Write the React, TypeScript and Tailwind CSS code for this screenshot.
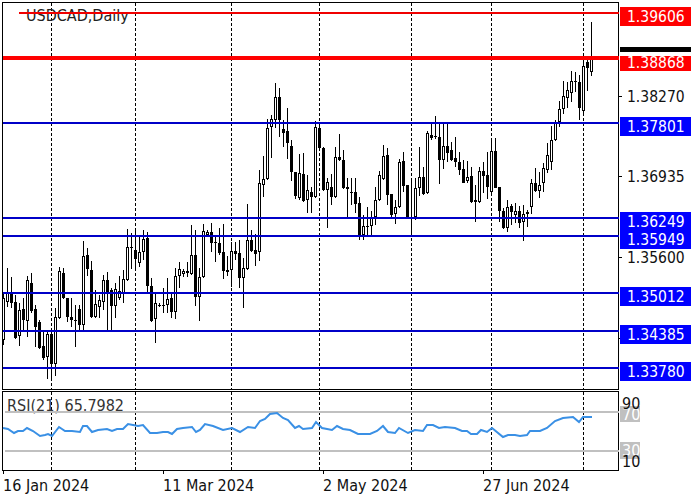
// USDCAD daily chart with support/resistance levels and an RSI pane
const font = "font-['DejaVu_Sans_Condensed','DejaVu_Sans',sans-serif]";

// high, low, body top, body bottom, 1 = white candle. One every 4px from x=3
const candles: number[][] = [
  [293, 345, 298, 340, 1], [268, 307, 293, 302, 1], [277, 308, 293, 303, 0], [295, 339, 302, 338, 0],
  [303, 346, 310, 336, 1], [298, 330, 309, 320, 0], [276, 337, 280, 321, 1], [273, 313, 283, 311, 0],
  [305, 347, 309, 327, 0], [320, 349, 322, 348, 0], [330, 360, 346, 358, 0], [330, 379, 334, 357, 1],
  [330, 378, 334, 364, 0], [308, 376, 317, 364, 1], [267, 319, 271, 318, 1], [268, 299, 273, 298, 0],
  [298, 322, 298, 317, 0], [298, 327, 317, 320, 0], [305, 347, 320, 321, 0], [305, 330, 309, 325, 0],
  [241, 330, 256, 325, 1], [248, 276, 255, 269, 0], [261, 318, 270, 317, 0], [290, 318, 304, 317, 1],
  [295, 318, 300, 307, 1], [275, 310, 280, 302, 1], [272, 330, 280, 293, 0], [288, 330, 290, 306, 0],
  [283, 318, 289, 306, 1], [276, 300, 291, 298, 1], [270, 303, 279, 293, 1], [229, 281, 247, 280, 1],
  [233, 269, 247, 248, 0], [230, 269, 250, 259, 0], [235, 267, 252, 263, 1], [230, 260, 239, 252, 1],
  [232, 293, 238, 286, 0], [278, 322, 286, 321, 0], [293, 343, 303, 319, 1], [303, 307, 305, 306, 0],
  [288, 313, 305, 306, 0], [278, 313, 299, 305, 1], [293, 318, 298, 312, 0], [268, 319, 276, 312, 1],
  [262, 288, 269, 276, 1], [269, 277, 271, 274, 1], [262, 277, 271, 273, 0], [225, 275, 255, 274, 1],
  [230, 306, 255, 297, 0], [268, 321, 277, 297, 1], [224, 278, 231, 277, 1], [230, 237, 232, 235, 1],
  [223, 252, 232, 243, 0], [235, 262, 242, 243, 0], [228, 255, 243, 253, 0], [224, 279, 252, 271, 0],
  [256, 276, 270, 272, 0], [242, 287, 251, 270, 1], [242, 260, 251, 254, 0], [240, 288, 253, 278, 0],
  [258, 308, 268, 278, 1], [204, 270, 240, 269, 1], [230, 252, 240, 251, 0], [234, 266, 250, 254, 0],
  [170, 261, 183, 252, 1], [156, 197, 179, 185, 1], [119, 180, 128, 179, 1], [115, 158, 119, 127, 1],
  [83, 128, 97, 120, 1], [88, 137, 97, 120, 0], [120, 147, 129, 133, 0], [108, 159, 131, 143, 0],
  [140, 181, 146, 172, 0], [172, 199, 172, 196, 0], [154, 200, 173, 198, 1], [153, 202, 174, 201, 0],
  [175, 213, 190, 200, 1], [187, 213, 192, 197, 0], [121, 198, 127, 197, 1], [123, 150, 128, 148, 0],
  [147, 191, 148, 190, 0], [178, 228, 182, 190, 1], [174, 205, 187, 197, 0], [147, 198, 157, 197, 1],
  [134, 161, 157, 160, 0], [150, 189, 160, 188, 0], [178, 218, 187, 189, 0], [178, 205, 192, 193, 0],
  [178, 213, 192, 204, 0], [197, 240, 203, 235, 0], [215, 240, 226, 235, 1], [207, 235, 226, 227, 0],
  [211, 235, 217, 226, 1], [187, 225, 200, 217, 1], [171, 201, 175, 200, 1], [145, 180, 156, 179, 1],
  [148, 205, 155, 195, 0], [194, 217, 194, 215, 0], [200, 224, 207, 214, 1], [159, 208, 162, 207, 1],
  [152, 192, 161, 186, 0], [185, 218, 185, 217, 0], [180, 233, 217, 218, 0], [178, 220, 188, 217, 1],
  [147, 196, 177, 188, 1], [167, 195, 177, 194, 0], [131, 194, 133, 193, 1], [123, 140, 135, 138, 0],
  [116, 139, 136, 137, 0], [123, 184, 137, 160, 0], [123, 169, 146, 160, 1], [123, 162, 146, 153, 0],
  [142, 161, 150, 160, 0], [137, 167, 158, 162, 0], [152, 175, 162, 170, 0], [160, 183, 169, 183, 0],
  [161, 183, 177, 181, 1], [167, 203, 176, 202, 0], [185, 222, 200, 202, 0], [167, 203, 171, 202, 1],
  [162, 193, 171, 176, 0], [152, 199, 175, 187, 0], [140, 195, 151, 192, 1], [138, 188, 151, 188, 0],
  [187, 222, 187, 211, 0], [208, 229, 211, 228, 0], [200, 232, 207, 228, 1], [204, 225, 206, 212, 0],
  [203, 223, 211, 215, 1], [206, 228, 211, 223, 0], [205, 241, 214, 222, 1], [210, 227, 212, 214, 1],
  [179, 214, 183, 207, 1], [168, 192, 183, 191, 0], [172, 198, 185, 191, 1], [163, 192, 168, 183, 1],
  [143, 173, 155, 170, 1], [126, 170, 140, 162, 1], [120, 141, 122, 140, 1], [101, 127, 109, 122, 1],
  [81, 114, 96, 109, 1], [82, 108, 90, 98, 1], [71, 102, 81, 93, 1], [72, 92, 81, 82, 0],
  [75, 120, 82, 108, 0], [60, 115, 66, 111, 1], [60, 91, 62, 68, 0], [22, 76, 58, 72, 1],
];

const rsi =
  "3,428 8,429 14,433 18,431 23,431 27,428 33,431 40,436 45,435 48,434 52,436 59,427 65,431 72,431 80,432 83,426 87,426 92,432 98,430 107,429 112,431 117,429 123,429 128,424 133,425 138,426 143,425 150,433 157,433 163,432 168,432 172,434 177,429 183,428 192,427 196,432 200,430 205,424 213,426 223,430 232,428 240,432 248,427 255,428 260,421 265,419 270,414 277,413 283,418 288,420 295,428 299,426 303,429 312,428 316,422 322,428 332,430 337,426 343,429 350,430 358,434 370,434 377,431 383,426 388,432 395,433 399,428 408,433 415,430 423,431 427,425 433,425 439,428 445,427 455,428 462,431 467,431 471,434 477,434 481,430 487,432 492,428 503,437 508,435 515,435 520,436 527,435 530,431 540,431 547,428 555,421 563,418 573,417 579,422 583,417 592,417";

const gridX = [51, 135, 231, 319, 411, 491, 583];
const blueLevels = [123, 218, 236, 293, 331, 368];

// y is the top of the 19px label in page pixels
const priceTicks = [96, 176, 257, 338];
const plainPrices = [
  { y: 88, text: "1.38270" },
  { y: 168, text: "1.36935" },
  { y: 249, text: "1.35600" },
  { y: 330, text: "1.34265" },
];
const levelLabels = [
  { y: 7, text: "1.39606", bg: "bg-[#ff0000]" },
  { y: 117, text: "1.37801", bg: "bg-[#0000ff]" },
  { y: 212, text: "1.36249", bg: "bg-[#0000ff]" },
  { y: 230, text: "1.35949", bg: "bg-[#0000ff]" },
  { y: 287, text: "1.35012", bg: "bg-[#0000ff]" },
  { y: 325, text: "1.34385", bg: "bg-[#0000ff]" },
  { y: 362, text: "1.33780", bg: "bg-[#0000ff]" },
];

const dates = ["16 Jan 2024", "11 Mar 2024", "2 May 2024", "27 Jun 2024"];

function Candle({ x, c }: { x: number; c: number[] }) {
  const [high, low, top, bottom, up] = c;
  const h = Math.max(bottom - top, 1);
  return (
    <g>
      <rect x={x} y={high} width={1} height={low - high} fill="#000" />
      <rect x={x - 1} y={top} width={3} height={h} fill="#000" />
      {up === 1 && h > 2 && <rect x={x} y={top + 1} width={1} height={h - 2} fill="#fff" />}
    </g>
  );
}

function MainChart() {
  return (
    <svg width={615} height={386} viewBox="3 3 615 386" shapeRendering="crispEdges" className="block overflow-visible">
      {gridX.map((x) => (
        <line key={x} x1={x + 0.5} x2={x + 0.5} y1={3} y2={389} stroke="#000" strokeDasharray="3 2" />
      ))}
      <text x={26} y={21} className={`${font} text-[16px] fill-[#222]`} shapeRendering="auto">
        USDCAD,Daily
      </text>
      {candles.map((c, i) => (
        <Candle key={i} x={3 + i * 4} c={c} />
      ))}
      <rect x={19} y={12} width={600} height={2} fill="#f00000" />
      <rect x={3} y={56} width={616} height={4} fill="#ff0000" />
      {blueLevels.map((y) => (
        <rect key={y} x={3} y={y - 1} width={616} height={2} fill="#0000c8" />
      ))}
    </svg>
  );
}

function RsiChart() {
  return (
    <svg width={615} height={78} viewBox="3 392 615 78" shapeRendering="crispEdges" className="block overflow-visible">
      {gridX.map((x) => (
        <line key={x} x1={x + 0.5} x2={x + 0.5} y1={392} y2={470} stroke="#000" strokeDasharray="3 2" />
      ))}
      <text x={7} y={411} className={`${font} text-[16px] fill-[#333]`} shapeRendering="auto">
        RSI(21) 65.7982
      </text>
      <rect x={5} y={411} width={614} height={2} fill="#c0c0c0" />
      <rect x={5} y={450} width={614} height={2} fill="#c0c0c0" />
      <polyline points={rsi} fill="none" stroke="#3a90e5" strokeWidth={2} shapeRendering="auto" />
    </svg>
  );
}

function PriceAxis() {
  return (
    <div className={`relative flex-1 ${font} text-[15.5px] leading-[19px]`}>
      {priceTicks.map((y) => (
        <div key={y} className="absolute left-0 w-[3px] h-px bg-black" style={{ top: y - 2 }} />
      ))}
      {plainPrices.map((p) => (
        <div key={p.y} className="absolute left-[8px] text-[#111]" style={{ top: p.y - 2 }}>
          {p.text}
        </div>
      ))}
      <div className="absolute left-[1px] top-[45px] w-[71px] h-[5px] bg-black" />
      <div className="absolute left-[1px] top-[54px] w-[71px] h-[15px] leading-[15px] pl-[7px] bg-[#ff0000] text-white">
        1.38868
      </div>
      {levelLabels.map((l) => (
        <div
          key={l.text}
          className={`absolute left-[1px] w-[71px] h-[19px] pl-[7px] pt-px text-white ${l.bg}`}
          style={{ top: l.y - 2 }}
        >
          {l.text}
        </div>
      ))}
    </div>
  );
}

function RsiAxis() {
  return (
    <div className={`relative flex-1 ${font} text-[16px] leading-[16px]`}>
      <div className="absolute left-[1px] top-[15px] w-[20px] h-[16px] pl-[2px] pt-[1px] bg-[#c0c0c0] text-white">70</div>
      <div className="absolute left-[1px] top-[51px] w-[20px] h-[17px] pl-[2px] pt-[1px] bg-[#c0c0c0] text-white">30</div>
      <div className="absolute left-[3px] top-[5px] text-[#111]">90</div>
      <div className="absolute left-[3px] top-[63px] text-[#111]">10</div>
    </div>
  );
}

export default function App() {
  return (
    <div className="w-[700px] h-[500px] bg-white overflow-hidden flex flex-col pt-[2px] pl-[2px]">
      <div className="flex h-[388px]">
        <div className="w-[617px] border border-black">
          <MainChart />
        </div>
        <PriceAxis />
      </div>
      <div className="flex h-[80px] mt-[1px]">
        <div className="w-[617px] border border-black">
          <RsiChart />
        </div>
        <RsiAxis />
      </div>
      <div className={`flex ${font} text-[16px] leading-[19px] text-[#111] pl-[1px]`}>
        {dates.map((d) => (
          <div key={d} className="w-[160px] relative pt-[5px]">
            <div className="absolute left-0 top-0 w-px h-[3px] bg-black" />
            {d}
          </div>
        ))}
      </div>
    </div>
  );
}
